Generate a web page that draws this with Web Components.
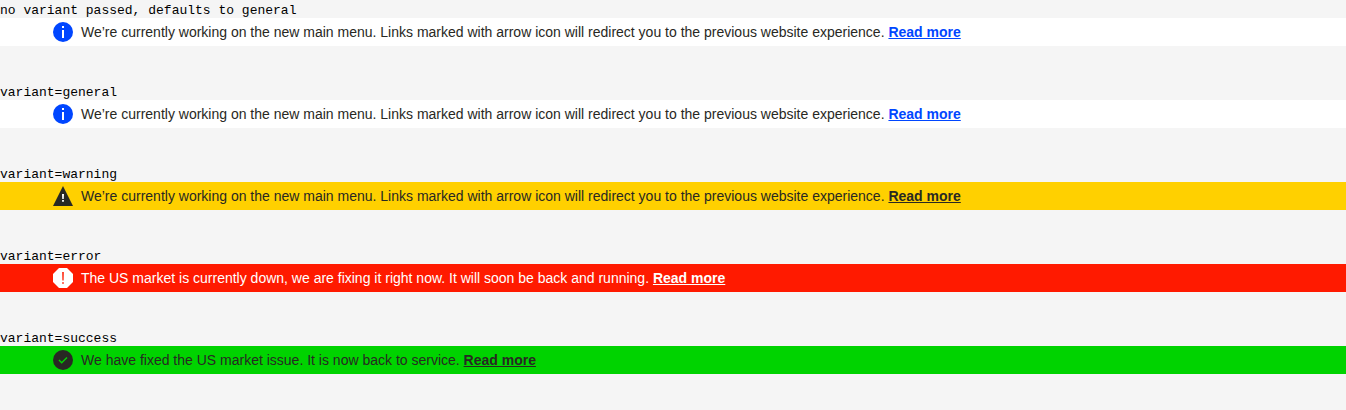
<!DOCTYPE html>
<html lang="en"><head><meta charset="utf-8"><title>Notification banner</title>
<style>body{margin:0;background:#f5f5f5}</style></head><body>
<banner-gallery></banner-gallery>
<script>
const icons = {
  general: '<circle cx="10" cy="10" r="10" fill="currentColor"/><path d="M9 4h2v2H9zM9 8h2v8H9z" fill="#fff"/>',
  warning: '<path d="M10 0l10 20H0z" fill="currentColor"/><path d="M9 8h2l-.25 5h-1.5zM9.100 14h1.800v1.800H9.100z" fill="#fff"/>',
  error: '<path d="M6 0h8l6 6v8l-6 6H6l-6-6V6z" fill="currentColor"/><path d="M9.200 4h1.600l-.2 8.500H9.400zM9.200 14.200h1.600v1.600H9.200z" fill="#ff1a00"/>',
  success: '<circle cx="10" cy="10" r="10" fill="currentColor"/><path d="M6 10l2.700 2.700L14 7.600" fill="none" stroke="#00d300" stroke-width="1.4"/>'
};
customElements.define('variant-icon', class extends HTMLElement {
  connectedCallback() {
    this.attachShadow({mode:'open'}).innerHTML = `<style>:host{display:block;width:20px;height:20px;flex:none}svg{display:block}</style><svg width="20" height="20" viewBox="0 0 20 20">${icons[this.getAttribute('name')]}</svg>`;
  }
});
customElements.define('notification-banner', class extends HTMLElement {
  connectedCallback() {
    const v = this.getAttribute('variant') || 'general';
    this.attachShadow({mode:'open'}).innerHTML = `<style>
:host{display:flex;align-items:center;gap:8px;height:28px;box-sizing:border-box;padding:0 53px;background:#fff;color:#282823;font:14px/20px "Liberation Sans",Arial,sans-serif;--accent:#0046ff}
:host([variant=warning]){background:#ffd000;--accent:#282823}
:host([variant=error]){background:#ff1a00;color:#fff;--accent:#fff}
:host([variant=success]){background:#00d300;--accent:#282823}
variant-icon,a{color:var(--accent)}a{font-weight:700;text-decoration:underline}
</style><variant-icon name="${v}"></variant-icon><span><slot></slot> <a href="#">Read more</a></span>`;
  }
});
customElements.define('banner-example', class extends HTMLElement {
  connectedCallback() {
    this.attachShadow({mode:'open'}).innerHTML = `<style>:host{display:block;height:82px;box-sizing:border-box;padding-top:3px}
.label{height:15px;font:13px/15px "Liberation Mono",monospace;color:#000}</style><div class="label">${this.getAttribute('label')}</div><slot></slot>`;
  }
});
customElements.define('banner-gallery', class extends HTMLElement {
  connectedCallback() {
    const menu = 'We’re currently working on the new main menu. Links marked with arrow icon will redirect you to the previous website experience.';
    const rows = [['','no variant passed, defaults to general',menu],['general','variant=general',menu],['warning','variant=warning',menu],
      ['error','variant=error','The US market is currently down, we are fixing it right now. It will soon be back and running.'],
      ['success','variant=success','We have fixed the US market issue. It is now back to service.']];
    this.attachShadow({mode:'open'}).innerHTML = '<style>:host{display:block}</style>' + rows.map(([v,l,t]) =>
      `<banner-example label="${l}"><notification-banner${v ? ` variant="${v}"` : ''}>${t}</notification-banner></banner-example>`).join('');
  }
});
</script></body></html>
